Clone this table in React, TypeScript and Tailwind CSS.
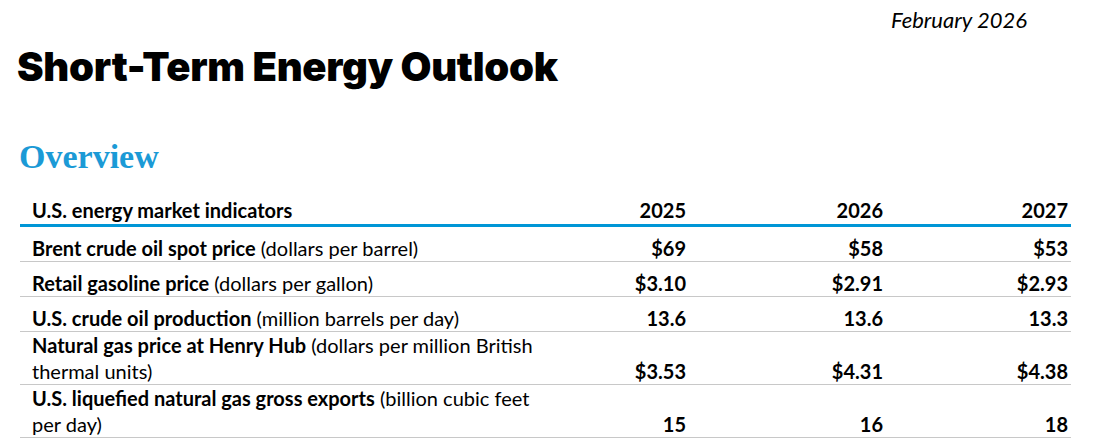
const rows = [
  { bold: "Brent crude oil spot price", rest: " (dollars per barrel)", v: ["$69", "$58", "$53"], h: "h-[36px]" },
  { bold: "Retail gasoline price", rest: " (dollars per gallon)", v: ["$3.10", "$2.91", "$2.93"], h: "h-[35px]" },
  { bold: "U.S. crude oil production", rest: " (million barrels per day)", v: ["13.6", "13.6", "13.3"], h: "h-[35px]" },
  { bold: "Natural gas price at Henry Hub", rest: " (dollars per million British", more: "thermal units)", v: ["$3.53", "$4.31", "$4.38"], h: "h-[53px]" },
  { bold: "U.S. liquefied natural gas gross exports", rest: " (billion cubic feet", more: "per day)", v: ["15", "16", "18"], h: "h-[53px]" },
];

export default function App() {
  return (
    <div className="w-[1100px] h-[446px] bg-white text-black overflow-hidden font-['Lato',sans-serif]">
      <div className="flex justify-end pr-[73px] pt-[7px]">
        <span className="italic text-[22px] leading-[26px]">February 2026</span>
      </div>
      <h1 className="pl-[17px] mt-[12px] font-['Inter',sans-serif] font-black text-[40px] leading-[44px] tracking-[-0.3px]">
        Short-Term Energy Outlook
      </h1>
      <h2 className="pl-[19px] mt-[50px] font-['Liberation_Serif',serif] font-bold text-[34px] leading-[36px] text-[#1b9ad6]">
        Overview
      </h2>
      <table className="ml-[20px] mt-[9px] w-[1051px] border-collapse text-[20px] leading-[26px] table-fixed">
        <thead>
          <tr className="border-b-[3px] border-[#0096d6] h-[41px]">
            <th className="text-left font-bold pl-[12px] align-bottom pb-[1px]">U.S. energy market indicators</th>
            <th className="text-right font-bold align-bottom pb-[1px] w-[120px]">2025</th>
            <th className="text-right font-bold align-bottom pb-[1px] w-[197px]">2026</th>
            <th className="text-right font-bold align-bottom pb-[1px] w-[188px] pr-[3px]">2027</th>
          </tr>
        </thead>
        <tbody>
          {rows.map((r) => (
            <tr key={r.bold} className={`border-b border-[#c8c8c8] ${r.h}`}>
              <td className="pl-[12px] pr-[8px] align-bottom pb-0">
                <div className="whitespace-nowrap">
                  <span className="font-bold">{r.bold}</span>
                  <span>{r.rest}</span>
                </div>
                {r.more && <div>{r.more}</div>}
              </td>
              <td className="text-right font-bold align-bottom pb-0">{r.v[0]}</td>
              <td className="text-right font-bold align-bottom pb-0">{r.v[1]}</td>
              <td className="text-right font-bold align-bottom pb-0 pr-[3px]">{r.v[2]}</td>
            </tr>
          ))}
        </tbody>
      </table>
    </div>
  );
}
